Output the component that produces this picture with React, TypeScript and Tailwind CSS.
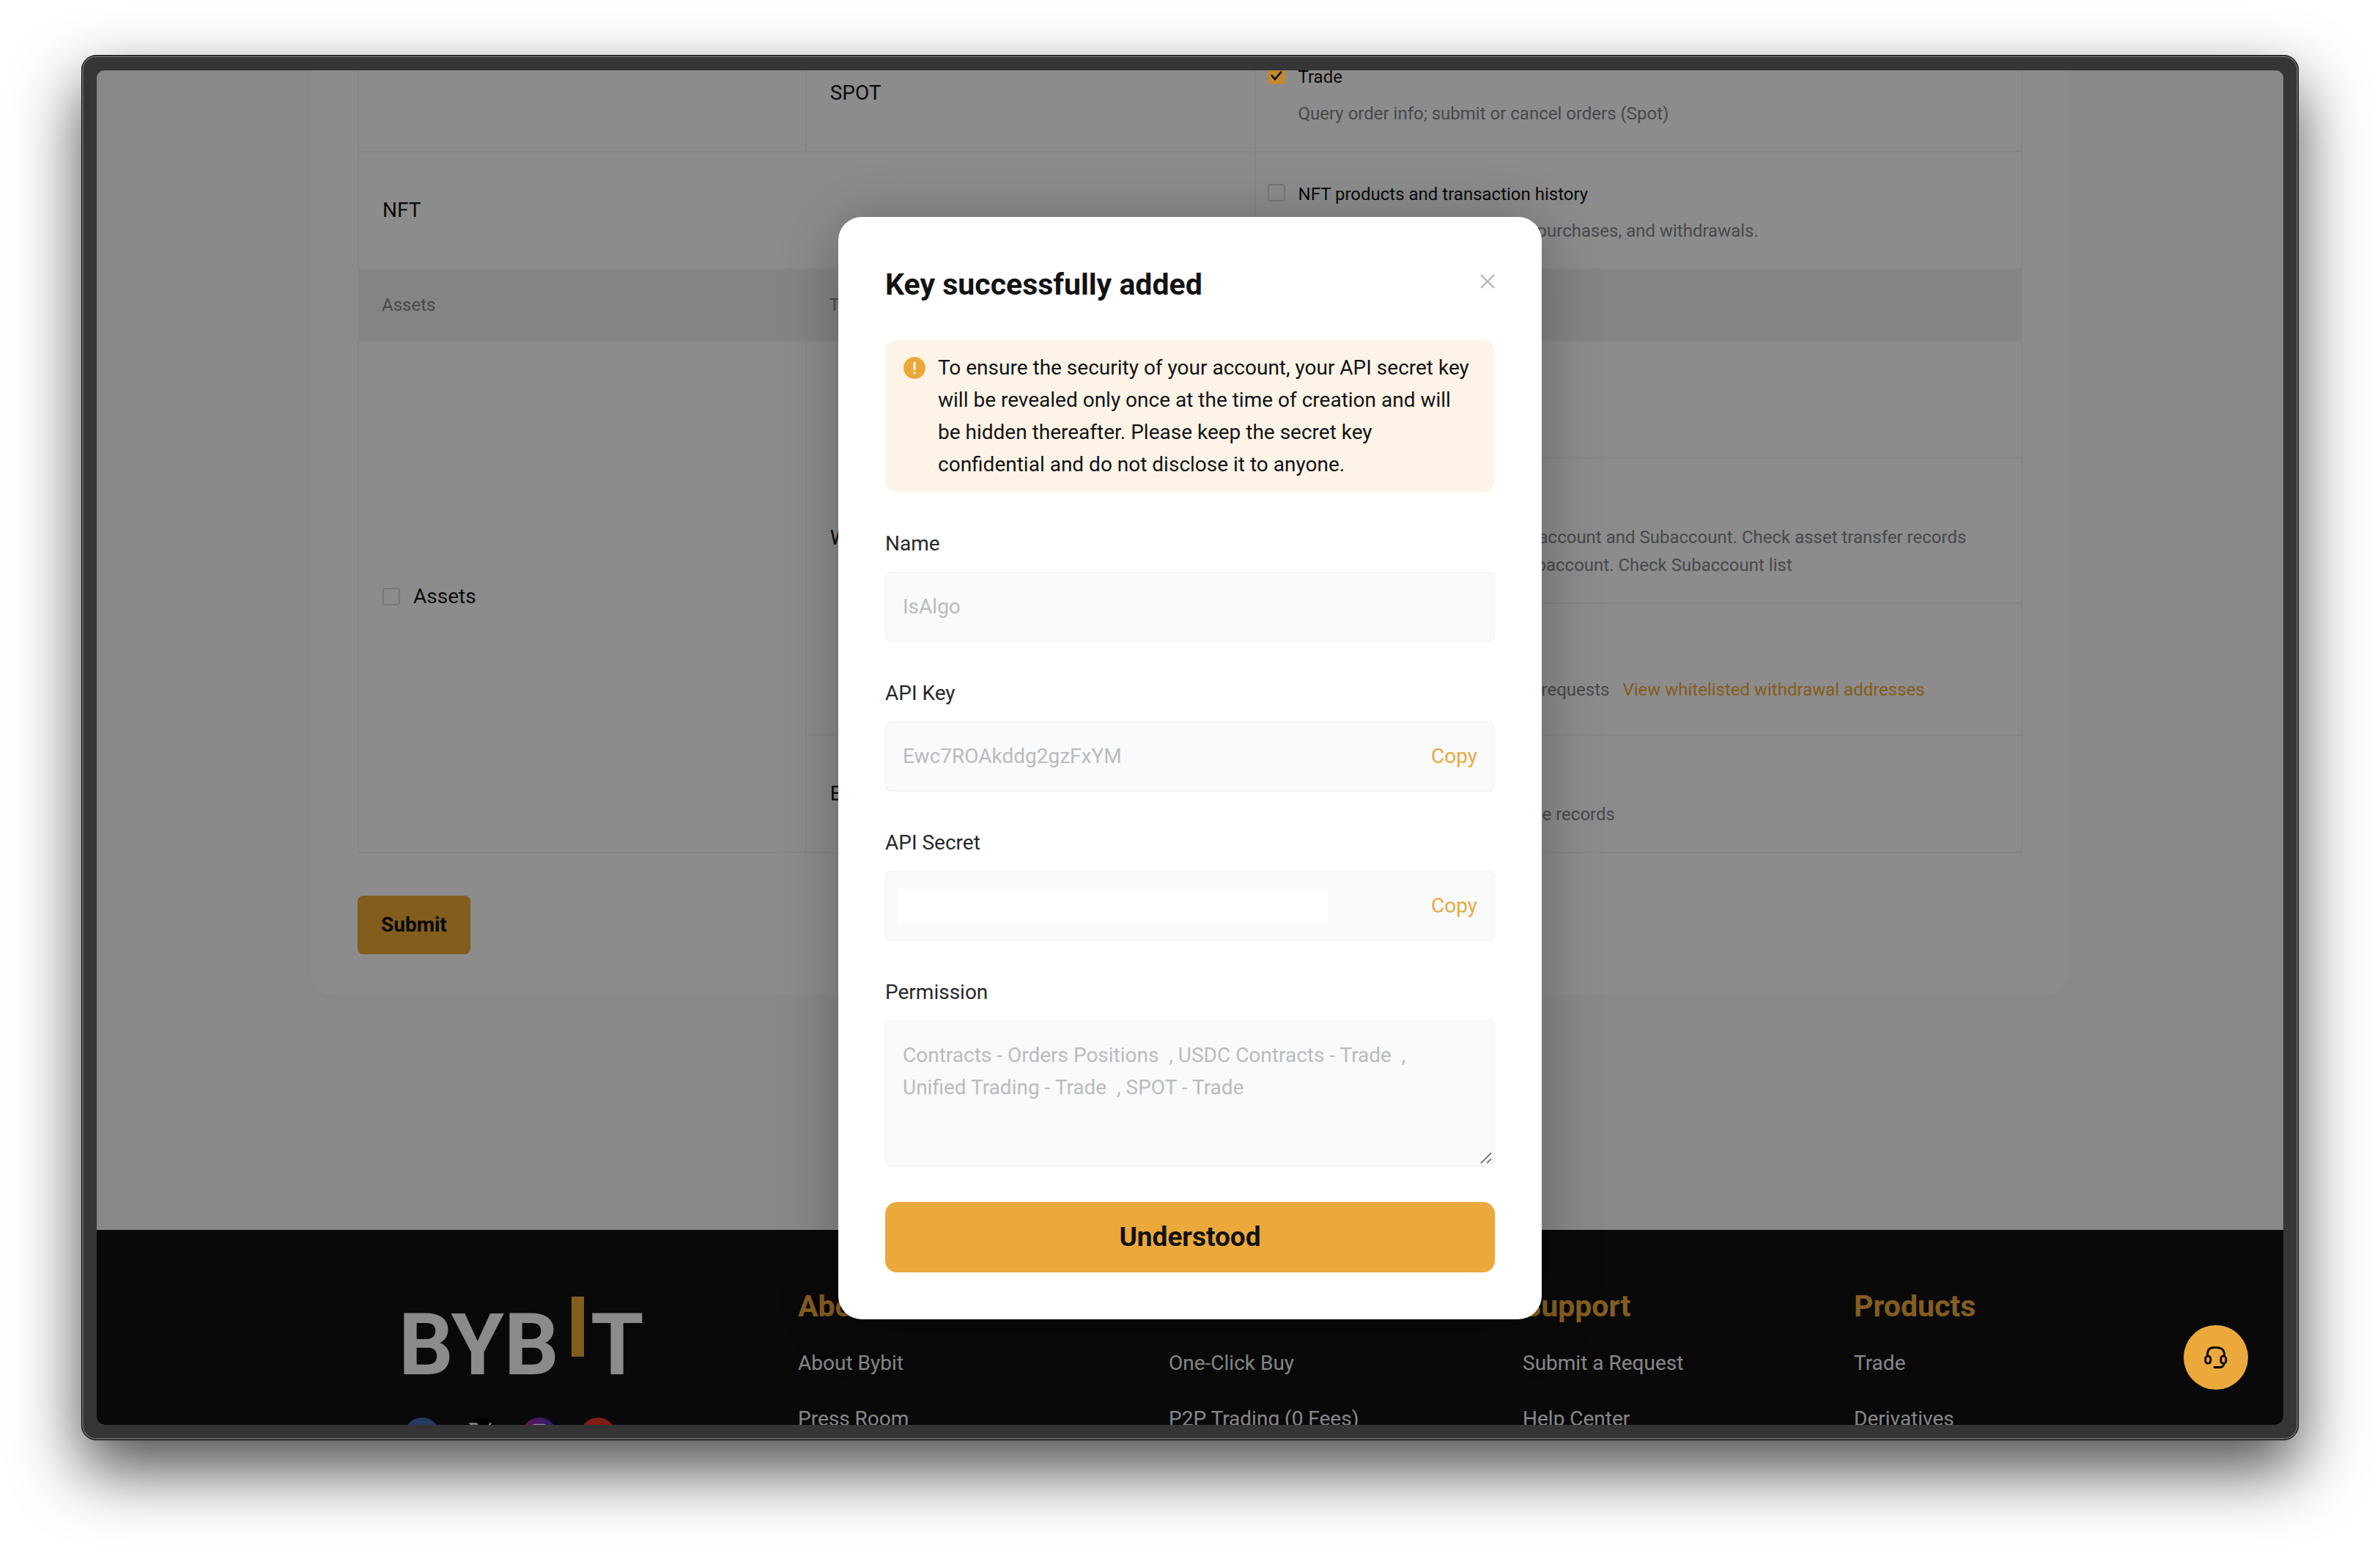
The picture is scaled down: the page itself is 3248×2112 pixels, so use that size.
import type { ReactNode } from "react";

const footerColumns = [
  { title: "About", links: ["About Bybit", "Press Room"] },
  { title: "Services", links: ["One-Click Buy", "P2P Trading (0 Fees)"] },
  { title: "Support", links: ["Submit a Request", "Help Center"] },
  { title: "Products", links: ["Trade", "Derivatives"] },
];

function CheckBox({ id }: { id: string }) {
  return (
    <input
      id={id}
      type="checkbox"
      className="size-6 shrink-0 appearance-none rounded border-2 border-[#d5d9e0] bg-transparent"
    />
  );
}

function CheckedBox({ id }: { id: string }) {
  return (
    <span className="relative z-20 block size-6 shrink-0">
      <input id={id} type="checkbox" defaultChecked className="block size-6 appearance-none rounded bg-[#c08a30]" />
      <svg viewBox="0 0 24 24" className="pointer-events-none absolute inset-0 size-6" fill="none" stroke="#0a0a0a" strokeWidth="2.6">
        <path d="M5 11.5 L10 17 L19 6.5" />
      </svg>
    </span>
  );
}

function Permission({
  id,
  label,
  checked,
  children,
}: {
  id: string;
  label: string;
  checked?: boolean;
  children: ReactNode;
}) {
  return (
    <div className="flex gap-[18px] pt-1.5 pl-4 text-2xl leading-[38px]">
      <div className="flex h-[34px] items-center">{checked ? <CheckedBox id={id} /> : <CheckBox id={id} />}</div>
      <div>
        <label htmlFor={id} className="block text-[#121214]">
          {label}
        </label>
        <div className="mt-3 whitespace-nowrap text-[#81858c]">{children}</div>
      </div>
    </div>
  );
}

function Lead({ className, children }: { className: string; children: ReactNode }) {
  return <span className={"inline-block overflow-hidden text-left align-top whitespace-nowrap " + className}>{children}</span>;
}

function PermissionTable() {
  return (
    <table className="w-full table-fixed border-collapse text-[28px] text-[#121214] [&_td]:border-2 [&_td]:border-[#f1f3f5] [&_td]:p-0">
      <colgroup>
        <col className="w-[26.9%]" />
        <col className="w-[27%]" />
        <col className="w-[46.1%]" />
      </colgroup>
      <tbody>
        <tr className="h-40">
          <td />
          <td>
            <span className="pl-8">SPOT</span>
          </td>
          <td>
            <Permission id="spot-trade" label="Trade" checked>
              Query order info; submit or cancel orders (Spot)
            </Permission>
          </td>
        </tr>
        <tr className="h-40">
          <td colSpan={2}>
            <span className="pl-8">NFT</span>
          </td>
          <td>
            <Permission id="nft-history" label="NFT products and transaction history">
              <Lead className="w-[326px]">Query NFT asset deposits and</Lead>
              purchases, and withdrawals.
            </Permission>
          </td>
        </tr>
        <tr className="h-[98px] bg-[#eff1f4] text-2xl text-[#81858c]">
          <th scope="col" className="text-left font-normal">
            <span className="pl-8">Assets</span>
          </th>
          <th scope="col" className="text-left font-normal">
            <span className="pl-8">Type</span>
          </th>
          <th scope="col" className="text-left font-normal">
            <span className="pl-4">Permissions</span>
          </th>
        </tr>
        <tr className="h-40">
          <td rowSpan={4}>
            <div className="flex items-center gap-[18px] pl-8">
              <CheckBox id="assets-all" />
              <label htmlFor="assets-all">Assets</label>
            </div>
          </td>
          <td rowSpan={3}>
            <span className="pl-8">Wallet</span>
          </td>
          <td>
            <Permission id="account-transfer" label="Account Transfer">
              Transfer between accounts
            </Permission>
          </td>
        </tr>
        <tr className="h-[198px]">
          <td>
            <Permission id="subaccount-transfer" label="Subaccount Transfer">
              <Lead className="w-[328px]">Transfer between the Main </Lead>
              account and Subaccount. Check asset transfer records
              <br />
              <Lead className="w-[325px]">between Main and the </Lead>
              baccount. Check Subaccount list
            </Permission>
          </td>
        </tr>
        <tr className="h-[180px]">
          <td>
            <Permission id="withdrawal" label="Withdrawal">
              <div className="leading-[56px]">
                <Lead className="w-[332px]">Submit withdrawal</Lead>
                requests
                <a href="#whitelist" className="ml-[18px] text-[#f0a92f]">
                  View whitelisted withdrawal addresses
                </a>
              </div>
            </Permission>
          </td>
        </tr>
        <tr className="h-40">
          <td>
            <span className="pl-8">Exchange</span>
          </td>
          <td>
            <Permission id="convert" label="Exchange History">
              <Lead className="w-[333px]">Query coin exchang</Lead>e records
            </Permission>
          </td>
        </tr>
      </tbody>
    </table>
  );
}

function Logo() {
  return (
    <div className="-ml-2 flex items-start font-bold text-[#fdfdfd]" aria-label="Bybit">
      <span className="mt-6 w-[236px] text-[117px] leading-[85px]">BYB</span>
      <span className="h-[82px] w-[17px] bg-[#eda933]" />
      <span className="mt-6 ml-[9px] text-[117px] leading-[85px]">T</span>
    </div>
  );
}

function SocialIcons() {
  return (
    <div className="flex gap-8">
      <a href="#facebook" aria-label="Facebook">
        <svg viewBox="0 0 48 48" className="size-12">
          <circle cx="24" cy="24" r="24" fill="#4a69ad" />
          <path d="M26 40V26h5l1-5h-6v-3c0-2 1-3 3-3h3v-5h-5c-4 0-6 3-6 7v4h-4v5h4v14z" fill="#fff" />
        </svg>
      </a>
      <a href="#x" aria-label="X">
        <svg viewBox="0 0 48 48" className="size-12">
          <circle cx="24" cy="24" r="24" fill="#000" />
          <path d="M10 8.500h8l20 30h-8zM38 7.500 L27 21M20 28 L10 38.500" fill="none" stroke="#fff" strokeWidth="2.4" />
        </svg>
      </a>
      <a href="#instagram" aria-label="Instagram">
        <svg viewBox="0 0 48 48" className="size-12">
          <defs>
            <linearGradient id="ig" x1="0" y1="0.5" x2="1" y2="0.2">
              <stop offset="0" stopColor="#c3287f" />
              <stop offset="1" stopColor="#4238dc" />
            </linearGradient>
          </defs>
          <circle cx="24" cy="24" r="24" fill="url(#ig)" />
          <rect x="11" y="10.500" width="26" height="26" rx="8" fill="none" stroke="#fff" strokeWidth="3.5" />
          <circle cx="24" cy="24" r="6" fill="none" stroke="#fff" strokeWidth="3.5" />
        </svg>
      </a>
      <a href="#youtube" aria-label="YouTube">
        <svg viewBox="0 0 48 48" className="size-12">
          <circle cx="24" cy="24" r="24" fill="#f03328" />
          <rect x="11" y="15" width="26" height="18" rx="5" fill="#fff" />
          <path d="M21 20v8l7-4z" fill="#f03328" />
        </svg>
      </a>
    </div>
  );
}

function Footer() {
  return (
    <footer className="mt-80 grid h-[400px] grid-cols-[537fr_506fr_483fr_452fr_226fr] bg-[#121212] pr-[360px] pl-[420px] whitespace-nowrap">
      <div className="flex flex-col gap-14 pt-[91px]">
        <Logo />
        <SocialIcons />
      </div>
      {footerColumns.map((column) => (
        <div key={column.title} className="pt-[76px]">
          <h3 className="text-[41px] leading-[56px] font-bold text-[#f0ab3a]">{column.title}</h3>
          <ul className="mt-7 text-[28px] text-[#f3f5f7]">
            {column.links.map((link) => (
              <li key={link} className="mb-8 leading-[44px]">
                <a href="#footer">{link}</a>
              </li>
            ))}
          </ul>
        </div>
      ))}
    </footer>
  );
}

function Field({ id, label, children }: { id: string; label: string; children: ReactNode }) {
  return (
    <div className="mt-12 text-[28px] leading-[44px]">
      <label htmlFor={id} className="mb-4 block text-[#25282c]">
        {label}
      </label>
      {children}
    </div>
  );
}

const boxStyle = "rounded-lg border-2 border-[#f3f5f7] bg-[#f9fafc]";

function CopyButton() {
  return (
    <button type="button" className="text-[#eba93b]">
      Copy
    </button>
  );
}

function KeyDialog() {
  return (
    <div
      role="dialog"
      aria-labelledby="dialog-title"
      className="w-[960px] rounded-[32px] bg-white p-16 shadow-[0_8px_80px_rgba(0,0,0,0.28)]"
    >
      <div className="flex items-start justify-between">
        <h2 id="dialog-title" className="text-[41px] leading-[56px] font-bold text-[#121214]">
          Key successfully added
        </h2>
        <button type="button" aria-label="Close" className="py-3.5">
          <svg viewBox="0 0 20 20" className="size-5" fill="none" stroke="#adb1b8" strokeWidth="2">
            <path d="M1 1 L19 19 M19 1 L1 19" />
          </svg>
        </button>
      </div>

      <div className="mt-12 flex gap-4 rounded-2xl bg-[#fdf4e7] py-4 pl-6">
        <svg viewBox="0 0 32 32" className="mt-1.5 size-8 shrink-0">
          <circle cx="16" cy="16" r="15" fill="#eba93b" />
          <path d="M16 9.200v8.600" stroke="#fff" strokeWidth="2.800" strokeLinecap="round" />
          <circle cx="16" cy="22.800" r="1.500" fill="#fff" />
        </svg>
        <p className="text-[28px] leading-[44px] whitespace-nowrap text-[#121214]">
          To ensure the security of your account, your API secret key
          <br />
          will be revealed only once at the time of creation and will
          <br />
          be hidden thereafter. Please keep the secret key
          <br />
          confidential and do not disclose it to anyone.
        </p>
      </div>

      <Field id="key-name" label="Name">
        <div className={"flex h-24 items-center px-[22px] " + boxStyle}>
          <input id="key-name" readOnly defaultValue="IsAlgo" className="w-full bg-transparent text-[#b9bbbe]" />
        </div>
      </Field>
      <Field id="api-key" label="API Key">
        <div className={"flex h-24 items-center px-[22px] " + boxStyle}>
          <input id="api-key" readOnly defaultValue="Ewc7ROAkddg2gzFxYM" className="min-w-0 flex-1 bg-transparent text-[#b9bbbe]" />
          <CopyButton />
        </div>
      </Field>
      <Field id="api-secret" label="API Secret">
        <div className={"flex h-24 items-center justify-between pr-[22px] pl-4 " + boxStyle}>
          <input id="api-secret" readOnly className="h-[45px] w-[586px] bg-white" />
          <CopyButton />
        </div>
      </Field>
      <Field id="permission" label="Permission">
        <div className="relative">
          <textarea
            id="permission"
            readOnly
            defaultValue={"Contracts - Orders Positions  , USDC Contracts - Trade  ,\nUnified Trading - Trade  , SPOT - Trade"}
            className={"block h-[200px] w-full resize-none overflow-hidden px-[22px] py-6 text-[#b9bbbe] " + boxStyle}
          />
          <svg viewBox="0 0 16 16" className="absolute right-1 bottom-1 size-4" stroke="#555" strokeWidth="1.500">
            <path d="M1 15 L15 1 M9 15 L15 9" />
          </svg>
        </div>
      </Field>

      <button
        type="button"
        className="mt-12 h-24 w-full rounded-2xl bg-[#eba93b] text-[37px] font-bold text-[#121214]"
      >
        Understood
      </button>
    </div>
  );
}

export default function App() {
  return (
    <div className="h-screen overflow-hidden bg-white px-[111px] pt-[75px] pb-[147px] font-[Roboto,'Liberation_Sans',sans-serif]">
      <div className="h-full rounded-[20px] border border-black bg-[#353535] p-5 shadow-[inset_0_0_0_2px_#646464,0_40px_90px_rgba(0,0,0,0.7)]">
        <div className="relative h-full overflow-hidden rounded-[11px] bg-[#f5f7fa]">
          <main className="mx-auto -mt-[50px] w-full max-w-[2400px] rounded-b-[32px] bg-white px-16 pb-14">
            <PermissionTable />
            <button type="button" className="mt-[58px] h-20 rounded-lg bg-[#eda933] px-8 text-[28px] font-bold text-[#121214]">
              Submit
            </button>
          </main>
          <Footer />

          <div className="absolute inset-0 z-10 bg-black/45" />
          <div className="absolute inset-0 z-30 flex items-start justify-center pt-[200px]">
            <KeyDialog />
          </div>
          <button
            type="button"
            aria-label="Customer support"
            className="absolute right-12 bottom-12 z-40 flex size-[88px] items-center justify-center rounded-full bg-[#eba93b]"
          >
            <svg viewBox="0 0 32 32" className="size-8" fill="none" stroke="#000" strokeWidth="2.800" strokeLinecap="round">
              <path d="M4.500 13.500v-1.500C4.500 5.500 8 2.500 13.500 2.500h4c5.500 0 10 3 10 9.500v1.500" />
              <rect x="1.800" y="14.200" width="7" height="10" rx="3.500" />
              <rect x="22.800" y="14.200" width="7" height="10" rx="3.500" />
              <path d="M27 24.500c0 3-2 5-5 5h-8" />
            </svg>
          </button>
        </div>
      </div>
    </div>
  );
}
